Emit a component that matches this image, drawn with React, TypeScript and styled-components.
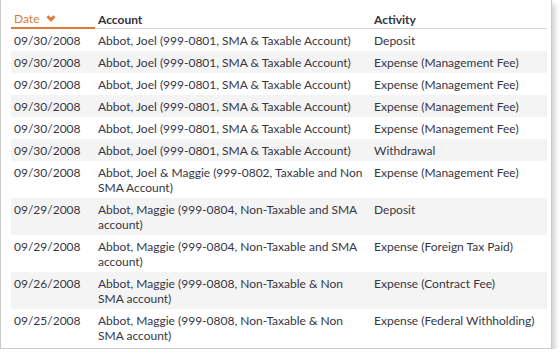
import React from "react";
import styled, { createGlobalStyle } from "styled-components";

const Global = createGlobalStyle`
  html, body { margin: 0; padding: 0; background: #ffffff; }
  body { font-family: Lato, "Open Sans", sans-serif; }
`;

const Frame = styled.div`
  box-sizing: border-box;
  width: 552px;
  height: 349px;
  border: 1px solid #c9c9c9;
  border-top: none;
  background: #fff;
  box-shadow: 3px 4px 5px rgba(0, 0, 0, 0.18);
  padding: 0 4px 0 10px;
  overflow: hidden;
`;

const Table = styled.table`
  width: 536px;
  border-collapse: collapse;
  table-layout: fixed;
  font-size: 12px;
  color: #363645;
`;

const Th = styled.th<{ $active?: boolean; $w: number }>`
  width: ${(p) => p.$w}px;
  height: 28px;
  padding: 0 0 1px 3px;
  line-height: 15px;
  text-align: left;
  font-size: 12px;
  font-weight: ${(p) => (p.$active ? 400 : 700)};
  color: ${(p) => (p.$active ? "#e07b35" : "#333340")};
  border-bottom: ${(p) => (p.$active ? "2px solid #e07b35" : "1px solid #d2d2d2")};
  vertical-align: bottom;
  box-sizing: border-box;
`;

const SortIcon = styled.svg`
  width: 10px;
  height: 8px;
  margin-left: 7px;
  vertical-align: 0px;
`;

const Tr = styled.tr<{ $alt: boolean }>`
  background: ${(p) => (p.$alt ? "#f4f4f4" : "#ffffff")};
  & + & td { border-top: 1px solid #d6d6d6; }
`;

const Td = styled.td`
  padding: 4px 0 3px 3px;
  line-height: 15px;
  vertical-align: top;
  white-space: nowrap;
`;

const rows: [string, string[], string][] = [
  ["09/30/2008", ["Abbot, Joel (999-0801, SMA & Taxable Account)"], "Deposit"],
  ["09/30/2008", ["Abbot, Joel (999-0801, SMA & Taxable Account)"], "Expense (Management Fee)"],
  ["09/30/2008", ["Abbot, Joel (999-0801, SMA & Taxable Account)"], "Expense (Management Fee)"],
  ["09/30/2008", ["Abbot, Joel (999-0801, SMA & Taxable Account)"], "Expense (Management Fee)"],
  ["09/30/2008", ["Abbot, Joel (999-0801, SMA & Taxable Account)"], "Expense (Management Fee)"],
  ["09/30/2008", ["Abbot, Joel (999-0801, SMA & Taxable Account)"], "Withdrawal"],
  ["09/30/2008", ["Abbot, Joel & Maggie (999-0802, Taxable and Non", "SMA Account)"], "Expense (Management Fee)"],
  ["09/29/2008", ["Abbot, Maggie (999-0804, Non-Taxable and SMA", "account)"], "Deposit"],
  ["09/29/2008", ["Abbot, Maggie (999-0804, Non-Taxable and SMA", "account)"], "Expense (Foreign Tax Paid)"],
  ["09/26/2008", ["Abbot, Maggie (999-0808, Non-Taxable & Non", "SMA account)"], "Expense (Contract Fee)"],
  ["09/25/2008", ["Abbot, Maggie (999-0808, Non-Taxable & Non", "SMA account)"], "Expense (Federal Withholding)"],
];

export default function App() {
  return (
    <>
      <Global />
      <Frame>
        <Table>
          <thead>
            <tr>
              <Th $active $w={84}>
                Date
                <SortIcon viewBox="0 0 10 8">
                  <path d="M0.5 2.2 L2.6 0.3 L5 2.6 L7.4 0.3 L9.5 2.2 L5 7 Z" fill="#e07b35" />
                </SortIcon>
              </Th>
              <Th $w={276}>Account</Th>
              <Th $w={176}>Activity</Th>
            </tr>
          </thead>
          <tbody>
            {rows.map((r, i) => (
              <Tr key={i} $alt={i % 2 === 1}>
                <Td>{r[0]}</Td>
                <Td>
                  {r[1].map((l, j) => (
                    <React.Fragment key={j}>
                      {j > 0 && <br />}
                      {l}
                    </React.Fragment>
                  ))}
                </Td>
                <Td>{r[2]}</Td>
              </Tr>
            ))}
          </tbody>
        </Table>
      </Frame>
    </>
  );
}
